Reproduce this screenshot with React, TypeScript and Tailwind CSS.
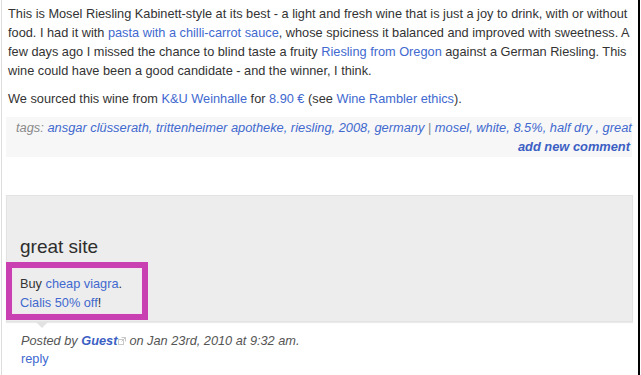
import React from "react";

const link = "text-[#4169cf]";

export default function App() {
  return (
    <div
      className="relative w-[641px] h-[375px] overflow-hidden bg-white text-[12.75px] leading-[19px] text-[#333333]"
      style={{ fontFamily: '"Liberation Sans", Arial, sans-serif' }}
    >
      <div className="ml-px w-[639px] h-[375px] border-l border-[#dddddd] border-r-2 border-r-black pt-[4px]">
        <p className="px-[6px] whitespace-nowrap">
          This is Mosel Riesling Kabinett-style at its best - a light and fresh wine that is just a joy to drink, with or without
          <br />
          food. I had it with <span className={link}>pasta with a chilli-carrot sauce</span>, whose spiciness it balanced and improved with sweetness. A
          <br />
          few days ago I missed the chance to blind taste a fruity <span className={link}>Riesling from Oregon</span> against a German Riesling. This
          <br />
          wine could have been a good candidate - and the winner, I think.
        </p>
        <p className="px-[6px] mt-[9px] whitespace-nowrap">
          We sourced this wine from <span className={link}>K&amp;U Weinhalle</span> for <span className={link}>8.90 €</span> (see{" "}
          <span className={link}>Wine Rambler ethics</span>).
        </p>
        <div className="ml-[4px] mt-[9px] w-[626px] h-[40px] bg-[#f7f7f7] pl-[10px] pr-[2px] pt-px italic text-[12.85px]">
          <div className="whitespace-nowrap text-[#4169cf]">
            <span className="text-[#8a8a8a]">tags: </span>ansgar clüsserath, trittenheimer apotheke, riesling, 2008, germany{" "}
            <span className="text-[#8a8a8a] not-italic">|</span> mosel, white, 8.5%, half dry , great
          </div>
          <div className="text-right font-bold text-[#3c5fc4]">add new comment</div>
        </div>
        <div className="ml-[4px] mt-[38px] w-[627px] h-[127px] bg-[#ededed] border border-[#e3e3e3] shadow-[0_1px_1px_rgba(0,0,0,0.08)] pl-[13px] pt-[40px]">
          <div className="text-[19px] leading-[22px] text-[#2e2e2e]">great site</div>
          <div className="mt-[16px]">
            Buy <span className={link}>cheap viagra</span>.
            <br />
            <span className={link}>Cialis 50% off</span>!
          </div>
        </div>
        <div className="ml-[34px] w-0 h-0 border-l-[6px] border-r-[6px] border-t-[6px] border-l-transparent border-r-transparent border-t-[#e2e2e2]" />
        <div className="pl-[19px] mt-[3px] italic text-[#555555] whitespace-nowrap">
          Posted by <span className="font-bold text-[#3c5fc4]">Guest</span>
          <svg width="8" height="8" viewBox="0 0 8 8" className="inline-block align-[0px] ml-px mr-[3px]" fill="none" stroke="#c8c8c8" strokeWidth="1">
            <rect x="0.5" y="2.5" width="5" height="5" />
            <path d="M3.5 0.5h4v4M7.5 0.5L3.5 4.5" />
          </svg>
          on Jan 23rd, 2010 at 9:32 am.
        </div>
        <div className="pl-[19px] leading-[17px] text-[#4169cf]">reply</div>
      </div>
      <div className="absolute left-[6px] top-[262px] w-[142px] h-[58px] border-[6px] border-[#c840b2]">
        <div className="w-full h-full border border-[#f4e6f1]" />
      </div>
    </div>
  );
}
